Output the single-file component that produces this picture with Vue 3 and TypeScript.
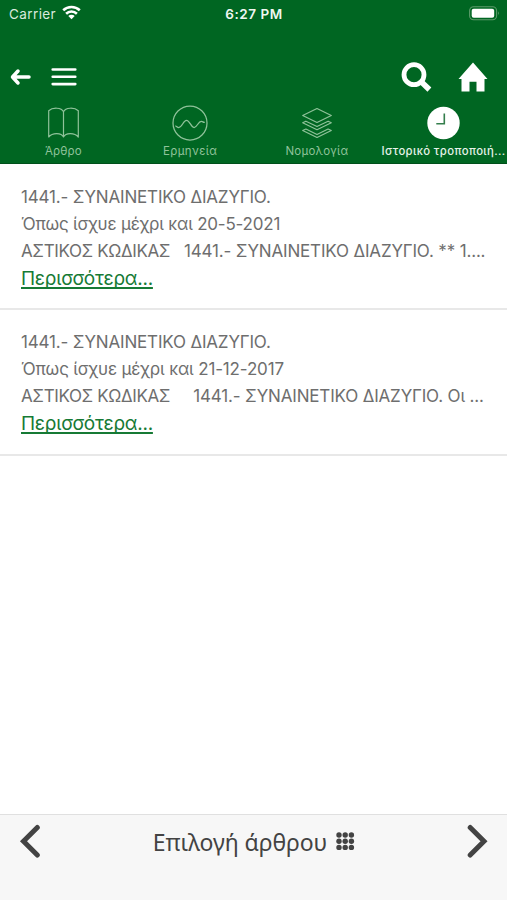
<script setup lang="ts">
interface Tab { id: string; label: string; active?: boolean }
interface Entry { title: string; validity: string; code: string; excerpt: string; kind: string }

const tabs: Tab[] = [
  { id: 'article', label: 'Άρθρο' },
  { id: 'analysis', label: 'Ερμηνεία' },
  { id: 'cases', label: 'Νομολογία' },
  { id: 'history', label: 'Ιστορικό τροποποιή...', active: true },
]
const entries: Entry[] = [
  {
    title: '1441.- ΣΥΝΑΙΝΕΤΙΚΟ ΔΙΑΖΥΓΙΟ.',
    validity: 'Όπως ίσχυε μέχρι και 20-5-2021',
    code: 'ΑΣΤΙΚΟΣ ΚΩΔΙΚΑΣ',
    excerpt: '\u00a0\u00a0 1441.- ΣΥΝΑΙΝΕΤΙΚΟ ΔΙΑΖΥΓΙΟ. ** 1....',
    kind: 'first',
  },
  {
    title: '1441.- ΣΥΝΑΙΝΕΤΙΚΟ ΔΙΑΖΥΓΙΟ.',
    validity: 'Όπως ίσχυε μέχρι και 21-12-2017',
    code: 'ΑΣΤΙΚΟΣ ΚΩΔΙΚΑΣ',
    excerpt: '\u00a0\u00a0\u00a0\u00a0 1441.- ΣΥΝΑΙΝΕΤΙΚΟ ΔΙΑΖΥΓΙΟ. Οι ...',
    kind: 'second',
  },
]
const dots = [3, 9.2, 15.4]
</script>

<template>
  <div class="screen">
    <header class="header">
      <div class="status">
        <div class="carrier">
          <span>Carrier</span>
          <svg width="19" height="15" viewBox="0 0 19 15" fill="none" stroke="#fff" stroke-width="2.6">
            <path d="M1.2 5.2a12.2 12.2 0 0 1 16.600 0M4.100 8.700a7.800 7.800 0 0 1 10.800 0" />
            <path d="M9.5 14.2 6.3 11a4.6 4.6 0 0 1 6.4 0z" fill="#fff" stroke="none" />
          </svg>
        </div>
        <span class="time">6:27 PM</span>
        <svg class="battery" width="31" height="15" viewBox="0 0 31 15">
          <rect x=".6" y=".8" width="27" height="13" rx="4" fill="none" stroke="#5c9b6b" stroke-width="1.1" />
          <rect x="2.7" y="2.8" width="22.5" height="9" rx="2" fill="#fff" />
          <path d="M29 5.3q1.8 2 0 4z" fill="#6da77a" />
        </svg>
      </div>
      <nav class="toolbar">
        <div class="group">
          <svg width="21" height="18" viewBox="0 0 21 18" fill="none" stroke="#fff" stroke-width="3.5" stroke-linecap="round" stroke-linejoin="round">
            <path d="M8 3 2.500 9l5.500 6M3 9h16" />
          </svg>
          <svg class="menu" width="26" height="20" viewBox="0 0 26 20" stroke="#fff" stroke-width="2.6" stroke-linecap="round">
            <path d="M1.7 2.5h22.6M1.7 9.8h22.6M1.7 17.1h22.6" />
          </svg>
        </div>
        <div class="group">
          <svg width="31" height="31" viewBox="0 0 31 31" fill="none" stroke="#fff">
            <circle cx="13" cy="12.7" r="10" stroke-width="4.8" />
            <path d="m19.700 19.3 8.700 8.300" stroke-width="5.6" />
          </svg>
          <svg class="home" width="30" height="30" viewBox="0 0 30 30" fill="#fff">
            <path d="M15 .5 29.5 17H26.500v12.5h-8V19.8h-7v9.700H3.500V17H.5z" />
          </svg>
        </div>
      </nav>
      <nav class="tabs">
        <div v-for="tab in tabs" :key="tab.id" class="tab" :class="[tab.id, { active: tab.active }]">
          <svg v-if="tab.id === 'article'" width="36" height="36" viewBox="0 0 36 36" fill="none" stroke="currentColor" stroke-width="1.2" stroke-linejoin="round">
            <path d="M18.500 6.800C16.500 2.200 7.500 2.200 3.700 5.800v26.200C7.500 27.300 16.500 27.600 18.500 32c2-4.400 11-4.700 14.800 0V5.800C29.500 2.200 20.500 2.200 18.500 6.800zV32" />
          </svg>
          <svg v-else-if="tab.id === 'analysis'" width="36" height="36" viewBox="0 0 36 36" fill="none" stroke="currentColor" stroke-width="1.25">
            <circle cx="18" cy="18" r="17" />
            <path d="M3.3 21.2c1.200-.5 1.800 1.3 3.3 1.3 3.8 0 4.5-7.200 7.9-7.200 3.2 0 4.5 7.200 7.6 7.200 3 0 4-6.200 7.2-6.200 1.700 0 1.800 1.400 3.500.9" />
          </svg>
          <svg v-else-if="tab.id === 'cases'" width="36" height="36" viewBox="0 0 36 36" fill="none" stroke="currentColor" stroke-width="1.15" stroke-linejoin="round">
            <path d="M18 3.500 32.300 10.500 18 17.500 3.700 10.500z" />
            <path d="m6.900 16.200-3.200 1.600L18 24.700l14.300-6.900-3.200-1.600L18 21.600z" />
            <path d="m6.900 24-3.200 1.600L18 32.500l14.300-6.900-3.200-1.600L18 29.400z" />
          </svg>
          <svg v-else width="36" height="36" viewBox="0 0 36 36" fill="none">
            <circle cx="17.500" cy="18" r="16.200" fill="#fff" />
            <path d="M18.300 8.5v10.3h-8" stroke="#347e4c" stroke-width="1.6" />
          </svg>
          <span>{{ tab.label }}</span>
        </div>
      </nav>
    </header>
    <main>
      <article v-for="entry in entries" :key="entry.kind" class="entry" :class="entry.kind">
        <p class="title">{{ entry.title }}</p>
        <p class="validity">{{ entry.validity }}</p>
        <p class="excerpt"><span class="code">{{ entry.code }}</span>{{ entry.excerpt }}</p>
        <a class="more">Περισσότερα...</a>
      </article>
    </main>
    <footer class="footer">
      <svg width="22" height="36" viewBox="0 0 22 36" fill="none" stroke="#434343" stroke-width="5" stroke-linecap="round">
        <path d="M18.300 3.500 4.500 17.300 18.300 31.100" stroke-linejoin="miter" />
      </svg>
      <div class="picker">
        <span>Επιλογή άρθρου</span>
        <svg width="19" height="19" viewBox="0 0 19 19" fill="#434343">
          <template v-for="y in dots" :key="y">
            <circle v-for="x in dots" :key="x" :cx="x" :cy="y" r="2.7" />
          </template>
        </svg>
      </div>
      <svg width="22" height="36" viewBox="0 0 22 36" fill="none" stroke="#434343" stroke-width="5" stroke-linecap="round">
        <path d="M3.200 3.500 17 17.300 3.200 31.100" />
      </svg>
    </footer>
  </div>
</template>

<style>
body { margin: 0; background: #fff; }
</style>

<style scoped>
.screen { box-sizing: border-box; width: 507px; height: 900px; display: flex; flex-direction: column; overflow: hidden; font-family: Inter, "Noto Sans", sans-serif; }
svg { display: block; flex: none; }
.header { height: 164px; box-sizing: border-box; background: #006622; border-bottom: 1px solid #00501b; color: #fff; display: flex; flex-direction: column; flex: none; }
.status { height: 28px; display: grid; grid-template-columns: 1fr auto 1fr; align-items: center; padding: 0 7px 0 9px; font-size: 13.5px; box-sizing: border-box; }
.carrier { display: flex; align-items: center; gap: 6px; color: #d9eadd; letter-spacing: .4px; }
.carrier svg { margin-top: -3px; }
.time { font-weight: 600; letter-spacing: .55px; margin-left: -1px; color: #f0f7f1; }
.battery { justify-self: end; margin-top: -2px; }
.toolbar { height: 76px; padding: 22px 19px 0 10px; box-sizing: border-box; display: flex; justify-content: space-between; }
.group { display: flex; align-items: center; height: 54px; }
.menu { margin-left: 20px; }
.home { margin-left: 26px; }
.tabs { display: grid; grid-template-columns: repeat(4, 1fr); padding-top: 1px; }
.tab { display: flex; flex-direction: column; align-items: center; color: #8fc29a; font-size: 11.5px; line-height: 16px; letter-spacing: .3px; white-space: nowrap; }
.tab span { margin-top: 2px; }
.tab.article { letter-spacing: .15px; }
.tab.analysis { letter-spacing: .4px; }
.tab.cases { letter-spacing: .23px; }
.tab.active { color: #e5f2e8; letter-spacing: .4px; font-weight: 500; font-size: 11.3px; }
main { flex: 1; }
.entry { height: 146px; box-sizing: border-box; padding: 19px 20px 0 21px; border-bottom: 2px solid #e8e8e8; color: #6e6e6e; font-size: 17px; line-height: 27px; }
.entry.first { padding-top: 20px; }
.entry p { margin: 0; white-space: nowrap; letter-spacing: -.16px; }
.entry .code { letter-spacing: -.38px; }
.entry.first .validity { letter-spacing: -.21px; }
.more { display: block; width: max-content; color: #167a35; font-size: 19px; line-height: 28px; letter-spacing: -.25px; text-decoration: underline; text-decoration-thickness: 1.5px; text-underline-offset: 2px; text-decoration-skip-ink: none; }
.footer { height: 86px; box-sizing: border-box; flex: none; border-top: 1px solid #e0e0e0; background: #f7f7f7; display: flex; justify-content: space-between; align-items: flex-start; padding: 9px 18px 0 19px; }
.picker { height: 36px; display: flex; align-items: center; gap: 9px; color: #434343; font-family: "Noto Sans", sans-serif; font-size: 23px; letter-spacing: -.1px; }
.picker svg { margin-top: -2px; }
</style>
